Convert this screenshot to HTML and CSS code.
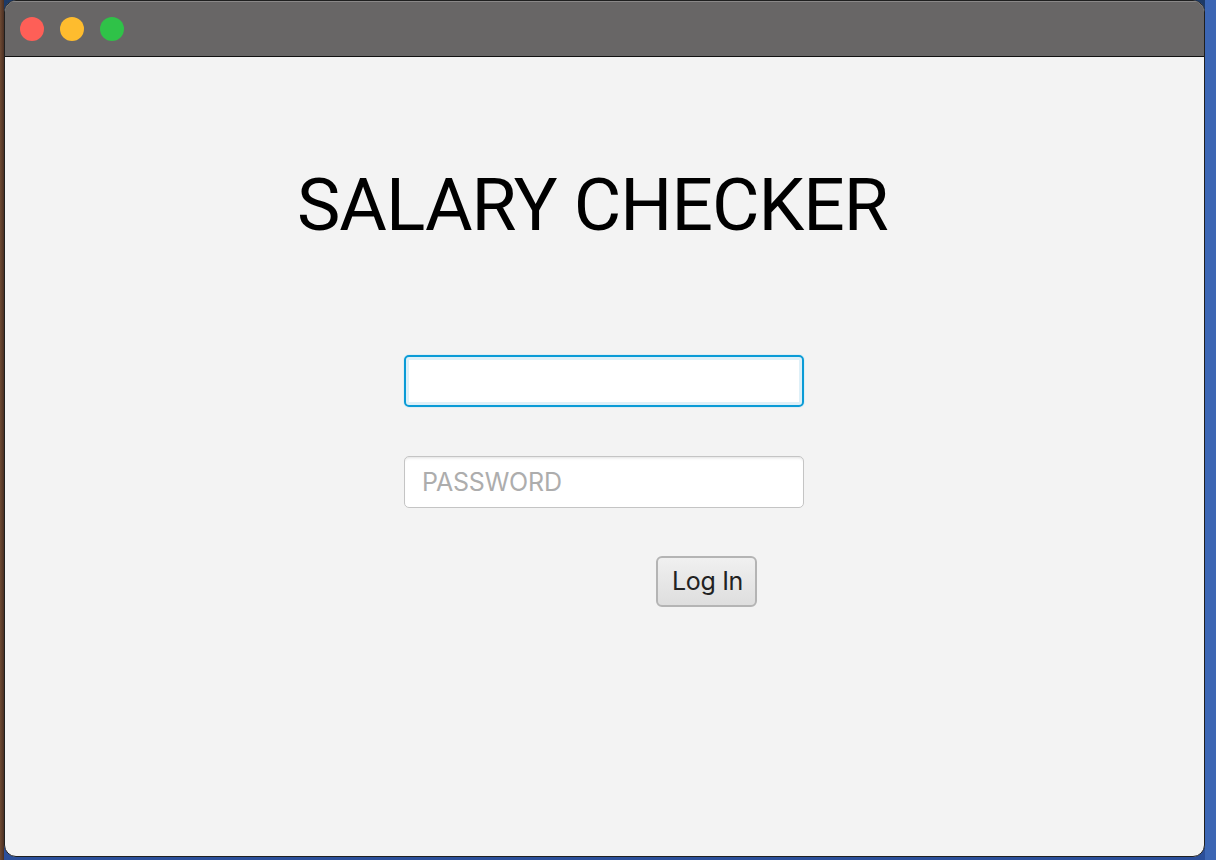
FILE: index.html
```html
<!DOCTYPE html>
<html>
<head>
<meta charset="utf-8">
<link rel="stylesheet" href="styles.css">
</head>
<body>
<div class="desktop">
  <div class="window">
    <div class="titlebar">
      <span class="light red"></span>
      <span class="light yellow"></span>
      <span class="light green"></span>
    </div>
    <div class="content">
      <h1 class="title">SALARY CHECKER</h1>
      <div class="field focused"></div>
      <div class="field"><span class="placeholder">PASSWORD</span></div>
      <button class="login">Log In</button>
    </div>
  </div>
</div>
</body>
</html>
```

FILE: styles.css
```css
html, body {
  margin: 0;
  padding: 0;
  width: 1216px;
  height: 860px;
  overflow: hidden;
}
body {
  font-family: Inter, "Liberation Sans", sans-serif;
  background:
    linear-gradient(to right, #6e4a33 0, #4a2f22 4px, transparent 4px, transparent 1205px, #3c66b4 1205px),
    linear-gradient(to bottom, #1d3a66 0, #2b4f9a 100%);
}
.desktop {
  padding: 0 11px 3px 4px;
  height: 857px;
}
.window {
  height: 855px;
  border: 1px solid #1f1f1f;
  border-radius: 12px;
  overflow: hidden;
  background: #f3f3f3;
  display: flex;
  flex-direction: column;
}
.titlebar {
  height: 55px;
  flex: none;
  background: #686666;
  border-bottom: 1px solid #111;
  display: flex;
  align-items: center;
  gap: 16px;
  padding-left: 15px;
  box-shadow: inset 0 1px 0 #8a8888;
}
.light {
  width: 24px;
  height: 24px;
  border-radius: 50%;
}
.red { background: #fe5f57; }
.yellow { background: #febc2e; }
.green { background: #2fc248; }
.content {
  flex: 1;
  display: flex;
  flex-direction: column;
  align-items: flex-start;
}
.title {
  margin: 104px 0 0 292px;
  font-family: Roboto, "Liberation Sans", sans-serif;
  font-weight: 400;
  font-size: 73px;
  line-height: 88px;
  color: #000;
  letter-spacing: -1px;
}
.field {
  box-sizing: border-box;
  width: 400px;
  height: 52px;
  margin-left: 399px;
  background: #fff;
  border: 1px solid #c4c4c4;
  border-radius: 5px;
  display: flex;
  align-items: center;
  padding-left: 17px;
  box-shadow: inset 0 3px 3px -2px #e0e0e0;
}
.field.focused {
  margin-top: 106px;
  border: 2px solid #0a9bd6;
  box-shadow: inset 0 0 0 3px #def0f8, 0 0 0 1px #e0eef4;
}
.field + .field {
  margin-top: 49px;
}
.placeholder {
  font-size: 25px;
  color: #adadad;
  letter-spacing: -0.2px;
}
.login {
  margin: 48px 0 0 651px;
  box-sizing: border-box;
  width: 101px;
  height: 51px;
  border: 2px solid #b4b4b4;
  border-radius: 6px;
  background: linear-gradient(to bottom, #f0f0f0, #dedede);
  font-family: Inter, "Liberation Sans", sans-serif;
  font-size: 25px;
  color: #222;
  padding: 0 0 2px 2px;
  letter-spacing: -0.3px;
}
```
